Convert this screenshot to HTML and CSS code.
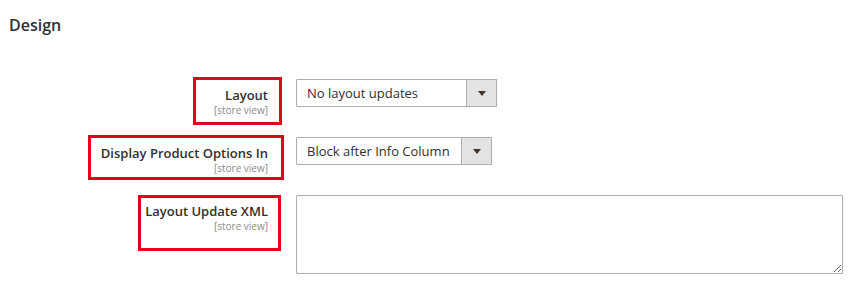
FILE: index.html
```html
<!DOCTYPE html>
<html lang="en">
<head>
    <meta charset="UTF-8">
    <meta name="viewport" content="width=device-width, initial-scale=1.0">
    <title>Design</title>
    <link rel="stylesheet" href="styles.css">
</head>
<body>
    <h2 class="section-title">Design</h2>

    <div class="fieldset">
        <div class="field">
            <div class="field-label">
                <label class="label-box label-box-layout" for="page-layout">
                    <span class="label-text">Layout</span>
                    <span class="scope">[store view]</span>
                </label>
            </div>
            <div class="field-control">
                <div class="select-wrap select-layout">
                    <select id="page-layout">
                        <option>No layout updates</option>
                        <option>Empty</option>
                        <option>1 column</option>
                        <option>2 columns with left bar</option>
                        <option>3 columns</option>
                    </select>
                    <span class="select-btn"></span>
                </div>
            </div>
        </div>

        <div class="field">
            <div class="field-label">
                <label class="label-box label-box-options" for="options-container">
                    <span class="label-text">Display Product Options In</span>
                    <span class="scope">[store view]</span>
                </label>
            </div>
            <div class="field-control">
                <div class="select-wrap select-options">
                    <select id="options-container">
                        <option>Block after Info Column</option>
                        <option>Product Info Column</option>
                    </select>
                    <span class="select-btn"></span>
                </div>
            </div>
        </div>

        <div class="field">
            <div class="field-label">
                <label class="label-box label-box-xml" for="layout-xml">
                    <span class="label-text">Layout Update XML</span>
                    <span class="scope">[store view]</span>
                </label>
            </div>
            <div class="field-control">
                <textarea id="layout-xml" class="xml-input"></textarea>
            </div>
        </div>
    </div>
</body>
</html>
```

FILE: styles.css
```css
body {
    margin: 0;
    font-family: "Open Sans", "Liberation Sans", sans-serif;
    color: #303030;
    background-color: #ffffff;
}
.section-title {
    margin: 0;
    padding: 15px 9px 0;
    font-size: 16px;
    line-height: 20px;
    font-weight: 600;
    color: #303030;
}
.fieldset {
    margin-top: 44px;
}
.field {
    display: flex;
    margin-bottom: 30px;
}
.field-label {
    width: 296px;
    height: 28px;
    flex-shrink: 0;
    display: flex;
    justify-content: flex-end;
    align-items: flex-start;
}

/* highlight boxes around the labels */
.label-box {
    box-sizing: border-box;
    flex-shrink: 0;
    display: flex;
    flex-direction: column;
    align-items: flex-end;
    border: 3px solid #e2001a;
    padding-top: 7px;
}
.label-box-layout {
    width: 89px;
    height: 48px;
    margin-top: -2px;
    margin-right: 14px;
    padding-right: 11px;
}
.label-box-options {
    width: 196px;
    height: 45px;
    margin-top: -2px;
    margin-right: 12px;
    padding-right: 13px;
}
.label-box-xml {
    width: 143px;
    height: 56px;
    margin-top: 0;
    margin-right: 15px;
    padding-top: 5px;
    padding-right: 10px;
}
.label-text {
    font-size: 13px;
    line-height: 17px;
    font-weight: 600;
    color: #303030;
    white-space: nowrap;
}
.scope {
    font-size: 10px;
    line-height: 12px;
    color: #8a8a8a;
    white-space: nowrap;
}

/* selects */
.select-wrap {
    position: relative;
    height: 28px;
}
.select-layout {
    width: 201px;
}
.select-options {
    width: 196px;
}
.select-wrap select {
    -webkit-appearance: none;
    appearance: none;
    box-sizing: border-box;
    width: 100%;
    height: 28px;
    margin: 0;
    padding: 0 34px 0 10px;
    border: 1px solid #adadad;
    border-radius: 1px;
    background-color: #ffffff;
    font-family: "Open Sans", "Liberation Sans", sans-serif;
    font-size: 13px;
    color: #303030;
}
.select-btn {
    position: absolute;
    top: 0;
    right: 0;
    box-sizing: border-box;
    width: 31px;
    height: 28px;
    background-color: #e3e3e3;
    border: 1px solid #adadad;
    pointer-events: none;
}
.select-btn::after {
    content: "";
    position: absolute;
    left: 11px;
    top: 11px;
    border-left: 4px solid transparent;
    border-right: 4px solid transparent;
    border-top: 5px solid #41362f;
}

.xml-input {
    box-sizing: border-box;
    display: block;
    width: 547px;
    height: 79px;
    margin: 0;
    border: 1px solid #adadad;
    border-radius: 1px;
    font-family: "Open Sans", "Liberation Sans", sans-serif;
    font-size: 13px;
}
```
